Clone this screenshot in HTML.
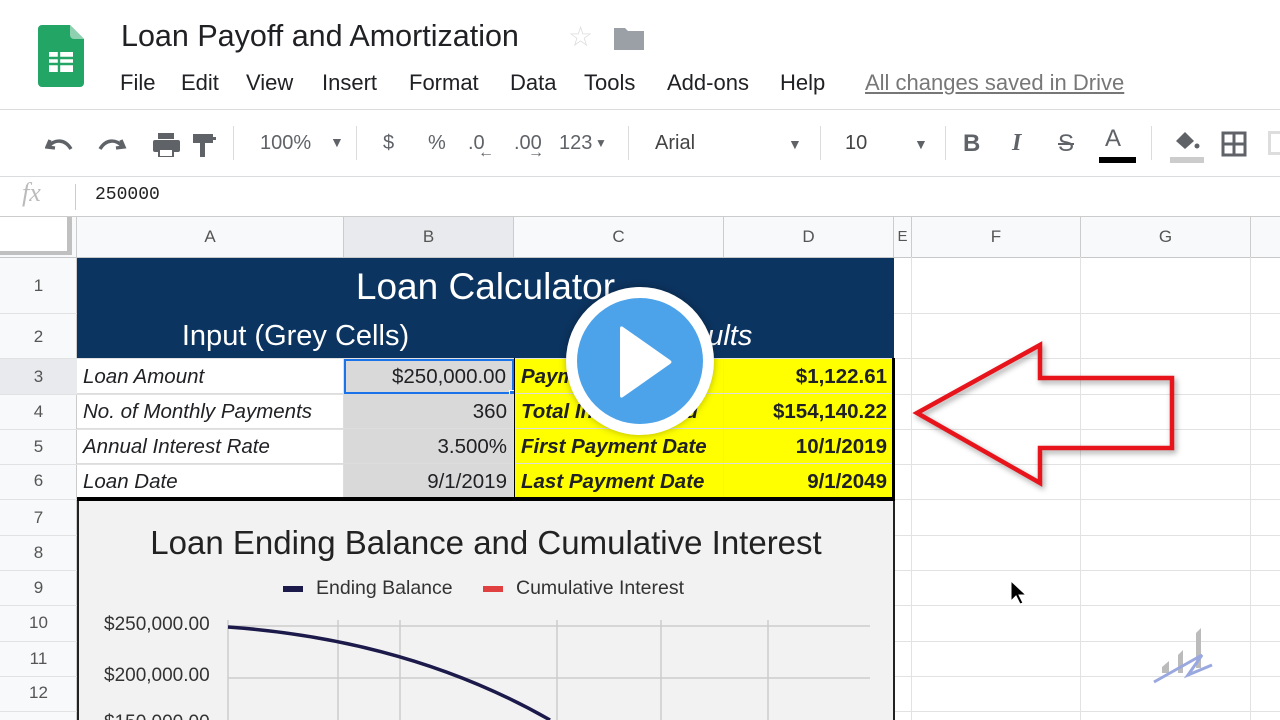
<!DOCTYPE html>
<html><head><meta charset="utf-8"><style>
*{margin:0;padding:0;box-sizing:border-box}
html,body{width:1280px;height:720px;overflow:hidden}
body{background:#fff;font-family:"Liberation Sans",Arial,sans-serif;position:relative;color:#202124}
.a{position:absolute}
.menu span{position:absolute;top:0;white-space:nowrap}
.tb{color:#5f6368;font-size:20px}
.hl{position:absolute;left:0;width:1280px;height:1px;background:#e2e2e2}
.vl{position:absolute;top:257px;width:1px;height:463px;background:#e2e2e2}
.rn{position:absolute;left:0;width:77px;text-align:center;font-size:17px;color:#555}
.ch{position:absolute;top:217px;height:40px;line-height:40px;text-align:center;font-size:17px;color:#555;border-right:1px solid #ccc}
.c{position:absolute;height:35px;line-height:35px;font-size:20.5px;white-space:nowrap;overflow:hidden;border-right:1px solid #ddd;border-bottom:1px solid #ddd}
.i{font-style:italic;padding-left:6px}
.r{text-align:right;padding-right:6px}
.y{background:#ffff00;font-weight:bold;font-style:italic}
.g{background:#d9d9d9}
</style></head><body>
<!-- header -->
<svg class="a" style="left:38px;top:25px" width="46" height="62" viewBox="0 0 46 62"><path d="M4 0h28l14 14v44a4 4 0 0 1-4 4H4a4 4 0 0 1-4-4V4a4 4 0 0 1 4-4z" fill="#23a566"/><path d="M32 0l14 14H36a4 4 0 0 1-4-4z" fill="#8ed1b1"/><rect x="11" y="27" width="24" height="20" fill="#fff"/><path d="M11 33h24M11 39h24M21 27v20" stroke="#23a566" stroke-width="2.4"/></svg>
<div class="a" style="left:121px;top:19px;font-size:30.5px;color:#202124">Loan Payoff and Amortization</div>
<div class="a" style="left:568px;top:20px;font-size:28px;color:#ddd">☆</div>
<svg class="a" style="left:614px;top:26px" width="30" height="24"><path d="M0 2h11l3 3h16v19H0z" fill="#9aa0a6"/></svg>
<div class="a menu" style="left:0;top:70px;font-size:22px;color:#202124"><span style="left:120px">File</span><span style="left:181px">Edit</span><span style="left:246px">View</span><span style="left:322px">Insert</span><span style="left:409px">Format</span><span style="left:510px">Data</span><span style="left:584px">Tools</span><span style="left:667px">Add-ons</span><span style="left:780px">Help</span><span style="left:865px;color:#777;text-decoration:underline">All changes saved in Drive</span></div>
<div class="hl" style="top:109px;background:#dadce0"></div>
<!-- toolbar -->
<svg class="a" style="left:45px;top:130px" width="180" height="30" fill="none" stroke="#5f6368" stroke-width="3.4"><path d="M5 10l-3 7 8 1M4 16c6-7 16-7 22 3"/><path d="M76 10l3 7-8 1M77 16c-6-7-16-7-22 3"/><g fill="#5f6368" stroke="none"><rect x="113" y="3" width="16" height="6"/><rect x="108" y="10" width="27" height="12" rx="2"/><rect x="113" y="19" width="16" height="8"/><rect x="148" y="4" width="20" height="9"/><rect x="165" y="7" width="6" height="3"/><rect x="155" y="13" width="5" height="14"/></g><rect x="115" y="20" width="12" height="6" fill="#fff" stroke="none"/></svg>
<div class="a" style="left:233px;top:126px;width:1px;height:34px;background:#dadce0"></div>
<div class="a tb" style="left:260px;top:132px">100%</div><div class="a tb" style="left:330px;top:134px;font-size:14px">▼</div>
<div class="a" style="left:356px;top:126px;width:1px;height:34px;background:#dadce0"></div>
<div class="a tb" style="left:383px;top:132px">$</div><div class="a tb" style="left:428px;top:132px">%</div>
<div class="a tb" style="left:468px;top:132px">.0</div><div class="a tb" style="left:478px;top:144px;font-size:16px">←</div>
<div class="a tb" style="left:514px;top:132px">.00</div><div class="a tb" style="left:528px;top:144px;font-size:16px">→</div>
<div class="a tb" style="left:559px;top:132px">123</div><div class="a tb" style="left:595px;top:136px;font-size:12px">▼</div>
<div class="a" style="left:628px;top:126px;width:1px;height:34px;background:#dadce0"></div>
<div class="a" style="left:655px;top:132px;font-size:20px;color:#444">Arial</div><div class="a tb" style="left:788px;top:136px;font-size:14px">▼</div>
<div class="a" style="left:820px;top:126px;width:1px;height:34px;background:#dadce0"></div>
<div class="a" style="left:845px;top:132px;font-size:20px;color:#444">10</div><div class="a tb" style="left:914px;top:136px;font-size:14px">▼</div>
<div class="a" style="left:945px;top:126px;width:1px;height:34px;background:#dadce0"></div>
<div class="a tb" style="left:963px;top:130px;font-weight:bold;font-size:24px">B</div>
<div class="a tb" style="left:1012px;top:130px;font-style:italic;font-size:24px;font-family:'Liberation Serif',serif;font-weight:bold">I</div>
<div class="a tb" style="left:1058px;top:130px;font-size:24px;text-decoration:line-through">S</div>
<div class="a tb" style="left:1105px;top:125px;font-size:24px">A</div><div class="a" style="left:1099px;top:157px;width:37px;height:6px;background:#000"></div>
<div class="a" style="left:1151px;top:126px;width:1px;height:34px;background:#dadce0"></div>
<svg class="a" style="left:1170px;top:128px" width="34" height="36"><path d="M6 13l9-9 9 9-9 8z" fill="#5f6368"/><circle cx="27" cy="18" r="2.5" fill="#5f6368"/><rect x="0" y="29" width="34" height="6" fill="#ccc"/></svg>
<svg class="a" style="left:1221px;top:131px" width="26" height="26" fill="none" stroke="#5f6368" stroke-width="3"><rect x="2" y="2" width="22" height="22"/><path d="M13 2v22M2 13h22"/></svg>
<div class="a" style="left:1268px;top:131px;width:12px;height:24px;border:3px solid #ddd;border-right:none"></div>
<div class="hl" style="top:176px;background:#dadce0"></div>
<!-- formula bar -->
<div class="a" style="left:22px;top:178px;font-size:26px;font-style:italic;color:#bbb;font-family:'Liberation Serif',serif">fx</div>
<div class="a" style="left:75px;top:184px;width:1px;height:26px;background:#ccc"></div>
<div class="a" style="left:95px;top:185px;font-size:18px;font-family:'Liberation Mono',monospace;color:#222">250000</div>
<div class="hl" style="top:216px;background:#ccc"></div>
<!-- grid -->
<div class="a" style="left:0;top:217px;width:1280px;height:40px;background:#f8f9fa"></div>
<div class="a" style="left:0;top:217px;width:77px;height:503px;background:#f8f9fa;border-right:1px solid #ccc"></div>
<div class="a" style="left:0;top:217px;width:72px;height:38px;background:#fff;border-right:5px solid #c0c0c0;border-bottom:4px solid #c0c0c0"></div>
<div class="ch" style="left:77px;width:267px">A</div>
<div class="ch" style="left:344px;width:170px;background:#e8eaed">B</div>
<div class="ch" style="left:514px;width:210px">C</div>
<div class="ch" style="left:724px;width:170px">D</div>
<div class="ch" style="left:894px;width:18px;font-size:15px">E</div>
<div class="ch" style="left:912px;width:169px">F</div>
<div class="ch" style="left:1081px;width:170px">G</div>
<div class="hl" style="top:257px;background:#c8c8c8"></div>
<div class="vl" style="left:911px"></div><div class="vl" style="left:1080px"></div><div class="vl" style="left:1250px"></div>
<div class="hl" style="top:313px"></div><div class="hl" style="top:358px"></div><div class="hl" style="top:394px"></div><div class="hl" style="top:429px"></div><div class="hl" style="top:464px"></div><div class="hl" style="top:499px"></div><div class="hl" style="top:535px"></div><div class="hl" style="top:570px"></div><div class="hl" style="top:605px"></div><div class="hl" style="top:641px"></div><div class="hl" style="top:676px"></div><div class="hl" style="top:711px"></div>
<div class="rn" style="top:276px">1</div><div class="rn" style="top:327px">2</div><div class="rn" style="background:#e8eaed;height:35px;line-height:35px;top:359px">3</div><div class="rn" style="top:402px">4</div><div class="rn" style="top:437px">5</div><div class="rn" style="top:471px">6</div><div class="rn" style="top:508px">7</div><div class="rn" style="top:543px">8</div><div class="rn" style="top:578px">9</div><div class="rn" style="top:613px">10</div><div class="rn" style="top:649px">11</div><div class="rn" style="top:683px">12</div>
<!-- loan calc -->
<div class="a" style="left:77px;top:258px;width:817px;height:100px;background:#0c3460"></div>
<div class="a" style="left:77px;top:266px;width:817px;text-align:center;color:#fff;font-size:37px">Loan Calculator</div>
<div class="a" style="left:77px;top:320px;width:437px;text-align:center;color:#fff;font-size:29px">Input (Grey Cells)</div>
<div class="a" style="left:514px;top:320px;width:380px;text-align:center;color:#fff;font-size:29px;font-style:italic">Results</div>
<div class="c i" style="left:77px;top:359px;width:267px">Loan Amount</div>
<div class="c i" style="left:77px;top:394px;width:267px">No. of Monthly Payments</div>
<div class="c i" style="left:77px;top:429px;width:267px">Annual Interest Rate</div>
<div class="c i" style="left:77px;top:464px;width:267px">Loan Date</div>
<div class="c r g" style="left:344px;top:359px;width:170px;border:2px solid #1a73e8;line-height:32px">$250,000.00</div>
<div class="a" style="left:509px;top:390px;width:7px;height:7px;background:#1a73e8;border:1px solid #fff"></div>
<div class="c r g" style="left:344px;top:394px;width:170px">360</div>
<div class="c r g" style="left:344px;top:429px;width:170px">3.500%</div>
<div class="c r g" style="left:344px;top:464px;width:170px">9/1/2019</div>
<div class="c y" style="left:514px;top:359px;width:210px;padding-left:7px">Payment</div>
<div class="c y" style="left:514px;top:394px;width:210px;padding-left:7px">Total Interest Paid</div>
<div class="c y" style="left:514px;top:429px;width:210px;padding-left:7px">First Payment Date</div>
<div class="c y" style="left:514px;top:464px;width:210px;padding-left:7px">Last Payment Date</div>
<div class="c y r" style="left:724px;top:359px;width:170px;font-style:normal">$1,122.61</div>
<div class="c y r" style="left:724px;top:394px;width:170px;font-style:normal">$154,140.22</div>
<div class="c y r" style="left:724px;top:429px;width:170px;font-style:normal">10/1/2019</div>
<div class="c y r" style="left:724px;top:464px;width:170px;font-style:normal">9/1/2049</div>
<div class="a" style="left:77px;top:497px;width:818px;height:4px;background:#000"></div>
<div class="a" style="left:514px;top:358px;width:1px;height:140px;background:#000"></div>
<div class="a" style="left:892px;top:358px;width:3px;height:142px;background:#000"></div>
<!-- chart -->
<div class="a" style="left:77px;top:501px;width:818px;height:219px;background:#f2f2f2;border-left:2px solid #222;border-right:2px solid #222"></div>
<div class="a" style="left:77px;top:524px;width:818px;text-align:center;font-size:33px;color:#222">Loan Ending Balance and Cumulative Interest</div>
<div class="a" style="left:283px;top:586px;width:20px;height:6px;background:#1c1a4a"></div>
<div class="a" style="left:316px;top:577px;font-size:19.5px;color:#333">Ending Balance</div>
<div class="a" style="left:483px;top:586px;width:20px;height:6px;background:#e04040"></div>
<div class="a" style="left:516px;top:577px;font-size:19.5px;color:#333">Cumulative Interest</div>
<div class="a" style="left:104px;top:614px;font-size:19px;color:#333">$250,000.00</div>
<div class="a" style="left:104px;top:665px;font-size:19px;color:#333">$200,000.00</div>
<div class="a" style="left:104px;top:712px;font-size:19px;color:#333">$150,000.00</div>
<svg class="a" style="left:220px;top:620px" width="660" height="100"><g stroke="#ccc" stroke-width="1.5"><path d="M8 6H650M8 58H650M8 0V100M118 0V100M180 0V100M337 0V100M441 0V100M548 0V100"/></g><path d="M8 7Q190 20 330 100" stroke="#1c1a4a" stroke-width="3.5" fill="none"/></svg>
<!-- cursor -->
<svg class="a" style="left:1010px;top:580px" width="18" height="26"><path d="M1 1v20l5-5 4 8 3-1-4-8h7z" fill="#000" stroke="#fff" stroke-width="1"/></svg>
<!-- watermark -->
<svg class="a" style="left:1150px;top:625px" width="65" height="60"><g fill="#bbb"><path d="M46 8l5-5v40h-5z"/><path d="M28 30l5-5v23h-5z"/><path d="M12 42l7-6v12h-7z"/></g><path d="M4 57L52 30 38 50 62 40" stroke="#9aa8e0" stroke-width="3" fill="none"/></svg>
<!-- arrow -->
<svg class="a" style="left:905px;top:335px" width="285" height="165"><path d="M12 78L135 10V43H267V113H135V148Z" fill="none" stroke="#e8141c" stroke-width="4.5" stroke-linejoin="miter" style="filter:drop-shadow(2px 3px 3px rgba(0,0,0,.35))"/></svg>
<!-- play button -->
<div class="a" style="left:566px;top:287px;width:148px;height:148px;border-radius:50%;background:#fff;box-shadow:0 0 8px rgba(0,0,0,.3)"></div>
<div class="a" style="left:577px;top:298px;width:126px;height:126px;border-radius:50%;background:#4da3ea"></div>
<svg class="a" style="left:566px;top:287px" width="148" height="148"><path d="M57 40Q54 38 54 42V108Q54 112 57 110L104 77Q107 75 104 73Z" fill="#fff"/></svg>
</body></html>
